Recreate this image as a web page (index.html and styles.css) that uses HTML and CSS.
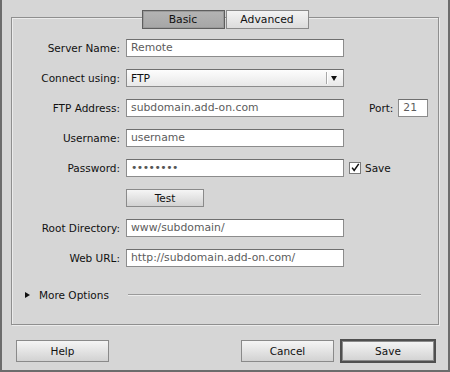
FILE: index.html
```html
<!DOCTYPE html>
<html>
<head>
<meta charset="utf-8">
<link rel="stylesheet" href="styles.css">
</head>
<body>
<div class="window">
  <div class="panel">
    <div class="tabs">
      <span class="tab tab-active">Basic</span>
      <span class="tab">Advanced</span>
    </div>
    <div class="form">
      <div class="row">
        <span class="lbl">Server Name:</span>
        <span class="field">Remote</span>
      </div>
      <div class="row">
        <span class="lbl">Connect using:</span>
        <span class="field select"><span class="select-text">FTP</span><span class="select-div"></span><span class="arrow"></span></span>
      </div>
      <div class="row">
        <span class="lbl">FTP Address:</span>
        <span class="field">subdomain.add-on.com</span>
        <span class="port-lbl">Port:</span>
        <span class="field port">21</span>
      </div>
      <div class="row">
        <span class="lbl">Username:</span>
        <span class="field">username</span>
      </div>
      <div class="row">
        <span class="lbl">Password:</span>
        <span class="field dots">••••••••</span>
        <span class="check"><svg width="12" height="12" viewBox="0 0 12 12"><path d="M2.5 5.5 L5 9 L10.5 1" fill="none" stroke="#111" stroke-width="1.8"/></svg></span>
        <span class="check-lbl">Save</span>
      </div>
      <div class="row">
        <span class="btn test">Test</span>
      </div>
      <div class="row">
        <span class="lbl">Root Directory:</span>
        <span class="field">www/subdomain/</span>
      </div>
      <div class="row">
        <span class="lbl">Web URL:</span>
        <span class="field">http://subdomain.add-on.com/</span>
      </div>
    </div>
    <div class="more">
      <span class="tri"></span>
      <span class="more-text">More Options</span>
      <span class="more-line"></span>
    </div>
  </div>
  <div class="buttons">
    <span class="btn big">Help</span>
    <span class="spacer"></span>
    <span class="btn big">Cancel</span>
    <span class="btn big default">Save</span>
  </div>
</div>
</body>
</html>
```

FILE: styles.css
```css
html, body {
  margin: 0;
  padding: 0;
}
body {
  width: 450px;
  height: 372px;
  background: #d6d6d6;
  font-family: "DejaVu Sans", sans-serif;
  font-size: 10.5px;
  color: #111;
  overflow: hidden;
}
.window {
  box-sizing: border-box;
  width: 450px;
  height: 372px;
  border: 2px solid #6c6c6c;
  border-top: none;
  padding: 17px 9px 0 9px;
  display: flex;
  flex-direction: column;
}
.panel {
  box-sizing: border-box;
  height: 308px;
  border: 1px solid #8f8f8f;
  box-shadow: inset 1px 1px 0 #ececec, 1px 1px 0 #ececec;
  display: flex;
  flex-direction: column;
}
.tabs {
  display: flex;
  justify-content: center;
  gap: 1px;
  margin-top: -8px;
}
.tab {
  box-sizing: border-box;
  width: 83px;
  height: 19px;
  display: flex;
  align-items: center;
  justify-content: center;
  border: 1px solid #8a8a8a;
  background: linear-gradient(#f3f3f3, #dcdcdc);
  font-size: 10.8px;
}
.tab-active {
  border-color: #5e5e5e;
  background: linear-gradient(#b4b4b4, #a6a6a6);
  box-shadow: inset 0 0 0 1px #9a9a9a;
}
.form {
  display: flex;
  flex-direction: column;
  gap: 12px;
  margin-top: 10px;
}
.row {
  display: flex;
  align-items: center;
  height: 18px;
}
.lbl {
  width: 108px;
  text-align: right;
  margin-right: 6px;
  white-space: nowrap;
}
.field {
  box-sizing: border-box;
  width: 218px;
  height: 18px;
  border: 1px solid #8c8c8c;
  border-top-color: #6f6f6f;
  background: #fff;
  padding: 0 4px;
  font-size: 10.8px;
  line-height: 15px;
  color: #5c5c5c;
  white-space: nowrap;
  overflow: hidden;
}
.select {
  display: flex;
  align-items: center;
  background: linear-gradient(#fdfdfd, #e8e8e8);
  color: #111;
  padding-right: 0;
}
.select-text {
  flex: 1;
}
.select-div {
  width: 1px;
  height: 12px;
  background: #a8a8a8;
  box-shadow: 1px 0 0 #fff;
}
.arrow {
  width: 0;
  height: 0;
  border-left: 3.5px solid transparent;
  border-right: 3.5px solid transparent;
  border-top: 5px solid #111;
  margin: 0 6px 0 4px;
}
.port-lbl {
  margin-left: 25px;
  margin-right: 5px;
}
.port {
  width: 30px;
}
.dots {
  color: #555;
  font-size: 10.8px;
  letter-spacing: -0.5px;
}
.check {
  box-sizing: border-box;
  width: 12px;
  height: 12px;
  margin-left: 5px;
  border: 1px solid #7a7a7a;
  background: #fff;
  display: flex;
}
.check svg {
  margin: -1px 0 0 0;
}
.check-lbl {
  margin-left: 4px;
}
.btn {
  box-sizing: border-box;
  display: flex;
  align-items: center;
  justify-content: center;
  border: 1px solid #8a8a8a;
  background: linear-gradient(#f5f5f5, #d2d2d2);
}
.test {
  width: 78px;
  height: 18px;
  margin-left: 114px;
}
.more {
  display: flex;
  align-items: center;
  height: 14px;
  margin-top: 21px;
  padding: 0 17px 0 13px;
}
.tri {
  width: 0;
  height: 0;
  border-top: 3.5px solid transparent;
  border-bottom: 3.5px solid transparent;
  border-left: 5px solid #111;
  margin-right: 9px;
}
.more-text {
  white-space: nowrap;
}
.more-line {
  flex: 1;
  height: 0;
  border-top: 1px solid #9a9a9a;
  border-bottom: 1px solid #ececec;
  margin-left: 19px;
}
.buttons {
  display: flex;
  align-items: center;
  height: 24px;
  margin-top: 14px;
  padding: 0 3px 0 5px;
}
.spacer {
  flex: 1;
}
.big {
  width: 93px;
  height: 22px;
}
.big + .big {
  margin-left: 6px;
}
.default {
  width: 96px;
  height: 24px;
  border: 2px solid #4f4f4f;
  box-shadow: inset 0 0 0 1px #8a8a8a;
}
```
